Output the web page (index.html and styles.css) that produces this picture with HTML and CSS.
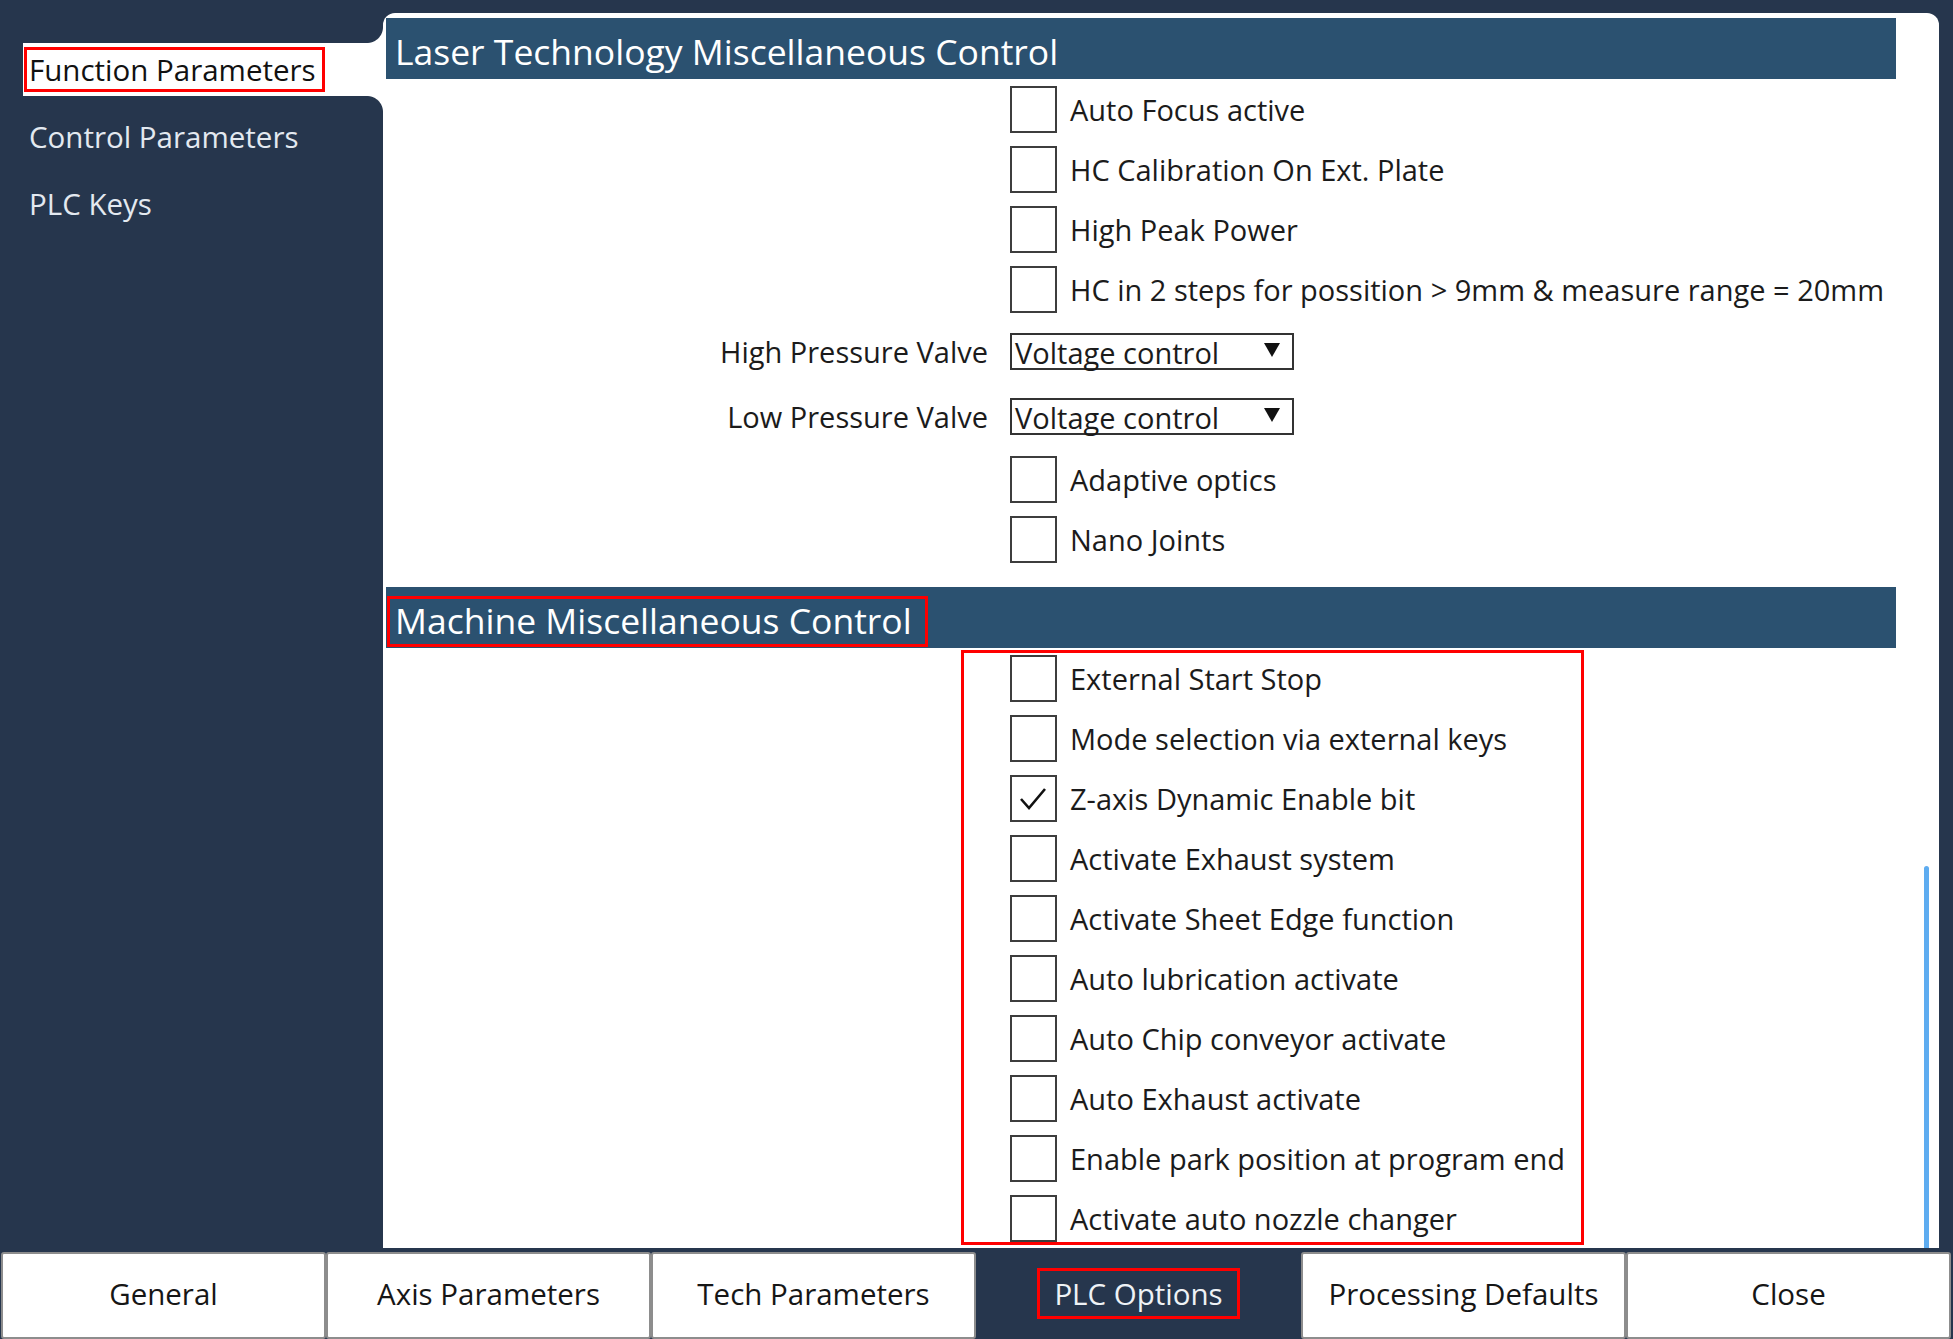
FILE: index.html
```html
<!DOCTYPE html>
<html lang="en">
<head>
<meta charset="utf-8">
<title>PLC Options - Function Parameters</title>
<link rel="stylesheet" href="styles.css">
</head>
<body>
<div class="app">
  <div class="main">
    <nav class="sidebar">
      <div class="nav-item active"><span class="nav-label">Function Parameters</span></div>
      <div class="nav-item"><span class="nav-label">Control Parameters</span></div>
      <div class="nav-item"><span class="nav-label">PLC Keys</span></div>
    </nav>
    <section class="panel">
      <div class="section-head"><span class="head-label">Laser Technology Miscellaneous Control</span></div>
      <div class="form">
        <div class="row cb-row"><span class="lbl"></span><div class="check"><span class="box"></span><span class="txt">Auto Focus active</span></div></div>
        <div class="row cb-row"><span class="lbl"></span><div class="check"><span class="box"></span><span class="txt">HC Calibration On Ext. Plate</span></div></div>
        <div class="row cb-row"><span class="lbl"></span><div class="check"><span class="box"></span><span class="txt">High Peak Power</span></div></div>
        <div class="row cb-row"><span class="lbl"></span><div class="check"><span class="box"></span><span class="txt">HC in 2 steps for possition &gt; 9mm &amp; measure range = 20mm</span></div></div>
        <div class="row dd-row"><span class="lbl">High Pressure Valve</span><div class="select"><span class="sel-txt">Voltage control</span><svg class="caret" width="16" height="14" viewBox="0 0 16 14"><polygon points="0,0 16,0 8,14" fill="#111"/></svg></div></div>
        <div class="row dd-row"><span class="lbl">Low Pressure Valve</span><div class="select"><span class="sel-txt">Voltage control</span><svg class="caret" width="16" height="14" viewBox="0 0 16 14"><polygon points="0,0 16,0 8,14" fill="#111"/></svg></div></div>
        <div class="row cb-row"><span class="lbl"></span><div class="check"><span class="box"></span><span class="txt">Adaptive optics</span></div></div>
        <div class="row cb-row"><span class="lbl"></span><div class="check"><span class="box"></span><span class="txt">Nano Joints</span></div></div>
      </div>
      <div class="section-head second"><span class="head-label marked">Machine Miscellaneous Control</span></div>
      <div class="form annotated">
        <div class="row cb-row"><span class="lbl"></span><div class="check"><span class="box"></span><span class="txt">External Start Stop</span></div></div>
        <div class="row cb-row"><span class="lbl"></span><div class="check"><span class="box"></span><span class="txt">Mode selection via external keys</span></div></div>
        <div class="row cb-row"><span class="lbl"></span><div class="check"><span class="box checked"><svg width="43" height="43" viewBox="0 0 43 43"><polyline points="9,22 17,31 33,12" fill="none" stroke="#111" stroke-width="2.6"/></svg></span><span class="txt">Z-axis Dynamic Enable bit</span></div></div>
        <div class="row cb-row"><span class="lbl"></span><div class="check"><span class="box"></span><span class="txt">Activate Exhaust system</span></div></div>
        <div class="row cb-row"><span class="lbl"></span><div class="check"><span class="box"></span><span class="txt">Activate Sheet Edge function</span></div></div>
        <div class="row cb-row"><span class="lbl"></span><div class="check"><span class="box"></span><span class="txt">Auto lubrication activate</span></div></div>
        <div class="row cb-row"><span class="lbl"></span><div class="check"><span class="box"></span><span class="txt">Auto Chip conveyor activate</span></div></div>
        <div class="row cb-row"><span class="lbl"></span><div class="check"><span class="box"></span><span class="txt">Auto Exhaust activate</span></div></div>
        <div class="row cb-row"><span class="lbl"></span><div class="check"><span class="box"></span><span class="txt">Enable park position at program end</span></div></div>
        <div class="row cb-row"><span class="lbl"></span><div class="check"><span class="box"></span><span class="txt">Activate auto nozzle changer</span></div></div>
        <div class="annot-box"></div>
      </div>
      <div class="scroll-thumb"></div>
    </section>
  </div>
  <div class="tabbar">
    <div class="tab">General</div>
    <div class="tab">Axis Parameters</div>
    <div class="tab">Tech Parameters</div>
    <div class="tab active"><span class="tab-mark">PLC Options</span></div>
    <div class="tab">Processing Defaults</div>
    <div class="tab">Close</div>
  </div>
</div>
</body>
</html>
```
FILE: styles.css
```css
html, body {
  margin: 0;
  padding: 0;
}
body {
  background: #26364d;
  font-family: "Open Sans", "Noto Sans", sans-serif;
  color: #1b1b1b;
  width: 1953px;
  height: 1339px;
  overflow: hidden;
}
.app {
  display: flex;
  flex-direction: column;
  height: 1339px;
}
.main {
  display: flex;
  height: 1248px;
  flex: none;
}
.sidebar {
  width: 383px;
  flex: none;
  padding-top: 43px;
  box-sizing: border-box;
  display: flex;
  flex-direction: column;
  gap: 14px;
}
.nav-item {
  position: relative;
  margin-left: 23px;
  height: 53px;
  display: flex;
  align-items: center;
  padding-left: 1px;
  font-size: 29.5px;
  color: #e3e9f0;
}
.nav-label {
  display: inline-block;
  border: 3px solid transparent;
  padding: 0 6px 0 2px;
  line-height: 39px;
  white-space: nowrap;
}
.nav-item.active {
  background: #fff;
  color: #111;
}
.nav-item.active .nav-label {
  border-color: #ff0000;
}
.nav-item.active::before,
.nav-item.active::after {
  content: "";
  position: absolute;
  right: 0;
  width: 16px;
  height: 16px;
}
.nav-item.active::before {
  top: -16px;
  background: radial-gradient(circle at 0 0, transparent 15.5px, #fff 16.5px);
}
.nav-item.active::after {
  bottom: -16px;
  background: radial-gradient(circle at 0 100%, transparent 15.5px, #fff 16.5px);
}
.panel {
  flex: 1;
  margin: 13px 14px 0 0;
  background: #fff;
  border-radius: 12px 12px 0 0;
  position: relative;
  overflow: hidden;
}
.section-head {
  margin: 5px 43px 0 3px;
  height: 61px;
  background: #2b5170;
  box-sizing: border-box;
  display: flex;
  align-items: flex-end;
  padding: 0 0 1px 1px;
  color: #fff;
  font-size: 35.5px;
}
.section-head.second {
  margin-top: 18px;
}
.head-label {
  display: inline-block;
  height: 51px;
  box-sizing: border-box;
  border: 3px solid transparent;
  padding: 0 13px 2px 5px;
  line-height: 43px;
  white-space: nowrap;
}
.head-label.marked {
  border-color: #ff0000;
}
.form {
  position: relative;
}
.row {
  display: grid;
  grid-template-columns: 605px auto;
  column-gap: 22px;
  align-items: center;
  font-size: 29px;
}
.cb-row {
  height: 60px;
}
.dd-row {
  height: 65px;
}
.lbl {
  text-align: right;
  white-space: nowrap;
}
.check {
  display: flex;
  align-items: center;
  gap: 13px;
  white-space: nowrap;
}
.box {
  width: 47px;
  height: 47px;
  box-sizing: border-box;
  border: 2px solid #3d3d3d;
  background: #fff;
  display: flex;
  align-items: center;
  justify-content: center;
}
.select {
  width: 284px;
  height: 37px;
  box-sizing: border-box;
  border: 2px solid #333;
  display: flex;
  align-items: center;
  justify-content: space-between;
  padding: 1px 12px 0 3px;
  font-size: 29px;
}
.sel-txt {
  line-height: 33px;
  white-space: nowrap;
}
.caret {
  display: block;
  margin-top: -4px;
}
.annot-box {
  position: absolute;
  left: 578px;
  top: 2px;
  width: 623px;
  bottom: 3px;
  border: 3px solid #ff0000;
  box-sizing: border-box;
  pointer-events: none;
}
.scroll-thumb {
  position: absolute;
  right: 10px;
  bottom: 0;
  width: 5px;
  height: 382px;
  background: #5eacf0;
  border-radius: 3px 3px 0 0;
}
.tabbar {
  margin-top: 4px;
  height: 87px;
  display: flex;
  padding: 0 2px 0 1px;
  box-sizing: border-box;
}
.tab {
  flex: 1 1 0;
  background: #fff;
  border: 2px solid #8d8d8d;
  border-radius: 3px;
  display: flex;
  align-items: center;
  justify-content: center;
  padding-bottom: 5px;
  font-size: 29.5px;
  color: #161616;
  white-space: nowrap;
}
.tab.active {
  background: #26364d;
  border-color: #26364d;
  color: #eef2f6;
}
.tab-mark {
  display: inline-block;
  height: 51px;
  box-sizing: border-box;
  border: 3px solid #ff0000;
  padding: 0 14px;
  line-height: 45px;
}
```
